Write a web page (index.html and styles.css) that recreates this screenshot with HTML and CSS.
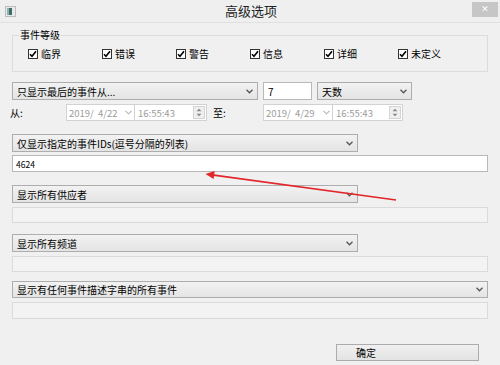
FILE: index.html
```html
<!DOCTYPE html>
<html>
<head>
<meta charset="utf-8">
<title>高级选项</title>
<link rel="stylesheet" href="styles.css">
</head>
<body>
<div class="window">
  <div class="titlebar">
    <div class="tb-left">
      <svg class="app-icon" width="11" height="11" viewBox="0 0 11 11"><rect x="0.5" y="0.5" width="10" height="10" fill="#e9e9e9" stroke="#bdbdbd"/><rect x="2" y="2" width="5" height="7" fill="#3f6d69"/><rect x="2" y="2" width="2" height="7" fill="#8fb3ae"/></svg>
    </div>
    <div class="title">高级选项</div>
    <div class="tb-right"><div class="close">✕</div></div>
  </div>

  <div class="content">
    <fieldset class="group">
      <legend>事件等级</legend>
      <div class="checks">
        <div class="chk"><span class="box"><svg width="8" height="8" viewBox="0 0 8 8"><path d="M1 4.2 L3 6.3 L7 1.3" fill="none" stroke="#000" stroke-width="1.6"/></svg></span>临界</div>
        <div class="chk"><span class="box"><svg width="8" height="8" viewBox="0 0 8 8"><path d="M1 4.2 L3 6.3 L7 1.3" fill="none" stroke="#000" stroke-width="1.6"/></svg></span>错误</div>
        <div class="chk"><span class="box"><svg width="8" height="8" viewBox="0 0 8 8"><path d="M1 4.2 L3 6.3 L7 1.3" fill="none" stroke="#000" stroke-width="1.6"/></svg></span>警告</div>
        <div class="chk"><span class="box"><svg width="8" height="8" viewBox="0 0 8 8"><path d="M1 4.2 L3 6.3 L7 1.3" fill="none" stroke="#000" stroke-width="1.6"/></svg></span>信息</div>
        <div class="chk"><span class="box"><svg width="8" height="8" viewBox="0 0 8 8"><path d="M1 4.2 L3 6.3 L7 1.3" fill="none" stroke="#000" stroke-width="1.6"/></svg></span>详细</div>
        <div class="chk"><span class="box"><svg width="8" height="8" viewBox="0 0 8 8"><path d="M1 4.2 L3 6.3 L7 1.3" fill="none" stroke="#000" stroke-width="1.6"/></svg></span>未定义</div>
      </div>
    </fieldset>

    <div class="row r2">
      <div class="combo w-last"><span>只显示最后的事件从...</span><svg class="chev" width="7" height="5" viewBox="0 0 7 5"><path d="M0.5 0.8 L3.5 3.8 L6.5 0.8" fill="none" stroke="#555" stroke-width="1.3"/></svg></div>
      <div class="textbox w-num">7</div>
      <div class="combo w-unit"><span>天数</span><svg class="chev" width="7" height="5" viewBox="0 0 7 5"><path d="M0.5 0.8 L3.5 3.8 L6.5 0.8" fill="none" stroke="#555" stroke-width="1.3"/></svg></div>
    </div>

    <div class="row r3">
      <span class="lbl-from">从:</span>
      <div class="date d1"><span>2019/&nbsp; 4/22</span><svg width="7" height="5" viewBox="0 0 7 5"><path d="M0.5 0.8 L3.5 3.8 L6.5 0.8" fill="none" stroke="#b5b5b5" stroke-width="1.1"/></svg></div>
      <div class="time t1"><span>16:55:43</span><span class="spin"><svg width="6" height="9" viewBox="0 0 6 9"><path d="M0.5 3.2 L3 0.7 L5.5 3.2 Z" fill="#888"/><path d="M0.5 5.8 L3 8.3 L5.5 5.8 Z" fill="#888"/></svg></span></div>
      <span class="lbl-to">至:</span>
      <div class="date d2"><span>2019/&nbsp; 4/29</span><svg width="7" height="5" viewBox="0 0 7 5"><path d="M0.5 0.8 L3.5 3.8 L6.5 0.8" fill="none" stroke="#b5b5b5" stroke-width="1.1"/></svg></div>
      <div class="time t2"><span>16:55:43</span><span class="spin"><svg width="6" height="9" viewBox="0 0 6 9"><path d="M0.5 3.2 L3 0.7 L5.5 3.2 Z" fill="#888"/><path d="M0.5 5.8 L3 8.3 L5.5 5.8 Z" fill="#888"/></svg></span></div>
    </div>

    <div class="row r4">
      <div class="combo w-mid"><span>仅显示指定的事件IDs(逗号分隔的列表)</span><svg class="chev" width="7" height="5" viewBox="0 0 7 5"><path d="M0.5 0.8 L3.5 3.8 L6.5 0.8" fill="none" stroke="#555" stroke-width="1.3"/></svg></div>
    </div>
    <div class="textbox full ids">4624</div>

    <div class="row r5">
      <div class="combo w-mid"><span>显示所有供应者</span><svg class="chev" width="7" height="5" viewBox="0 0 7 5"><path d="M0.5 0.8 L3.5 3.8 L6.5 0.8" fill="none" stroke="#555" stroke-width="1.3"/></svg></div>
    </div>
    <div class="disabled"></div>

    <div class="row r6">
      <div class="combo w-mid"><span>显示所有频道</span><svg class="chev" width="7" height="5" viewBox="0 0 7 5"><path d="M0.5 0.8 L3.5 3.8 L6.5 0.8" fill="none" stroke="#555" stroke-width="1.3"/></svg></div>
    </div>
    <div class="disabled"></div>

    <div class="row r7">
      <div class="combo full"><span>显示有任何事件描述字串的所有事件</span><svg class="chev" width="7" height="5" viewBox="0 0 7 5"><path d="M0.5 0.8 L3.5 3.8 L6.5 0.8" fill="none" stroke="#555" stroke-width="1.3"/></svg></div>
    </div>
    <div class="disabled d-last"></div>

    <div class="actions">
      <div class="btn">确定</div>
    </div>
  </div>

  <svg class="arrow" width="500" height="365" viewBox="0 0 500 365">
    <line x1="396" y1="200" x2="212" y2="174.9" stroke="#e3262b" stroke-width="1.6"/>
    <polygon points="205.5,174 214.6,171 213.6,179" fill="#e3262b"/>
  </svg>
</div>
</body>
</html>
```

FILE: styles.css
```css
* { box-sizing: border-box; }

html, body {
  margin: 0;
  padding: 0;
}

body {
  width: 500px;
  height: 365px;
  overflow: hidden;
  background: #f0f0f0;
  font-family: "Noto Sans CJK SC", "Microsoft YaHei", sans-serif;
  font-size: 10px;
  color: #000;
}

.window {
  position: relative;
  width: 500px;
  height: 365px;
  background: #f0f0f0;
}

/* title bar */
.titlebar {
  display: grid;
  grid-template-columns: 1fr auto 1fr;
  align-items: center;
  height: 23px;
  border-bottom: 1px solid #e1e1e1;
  background: #efefef;
}

.tb-left {
  padding-left: 5px;
  display: flex;
  align-items: center;
}

.app-icon { display: block; }

.title {
  font-size: 13px;
  color: #1e1e1e;
  line-height: 22px;
  padding-left: 2px;
}

.tb-right {
  justify-self: end;
  align-self: start;
}

.close {
  width: 26px;
  height: 15px;
  margin: 2px 2px 0 0;
  background: #c6c6c6;
  color: #fff;
  font-size: 9px;
  line-height: 15px;
  text-align: center;
  font-family: "DejaVu Sans", sans-serif;
}

/* content */
.content {
  padding: 0 12px;
}

.group {
  margin: 5px 0 0;
  padding: 0 0 5px 6px;
  border: 1px solid #dcdcdc;
  min-width: 0;
}

.group legend {
  padding: 0 1px;
  line-height: 14px;
  font-size: 10px;
}

.checks {
  display: flex;
  align-items: center;
  height: 24px;
  padding-left: 9px;
}

.chk {
  width: 74px;
  display: flex;
  align-items: center;
  gap: 3px;
  line-height: 12px;
}

.box {
  width: 10px;
  height: 10px;
  border: 1px solid #333;
  background: #fff;
  display: flex;
  align-items: center;
  justify-content: center;
}

.box svg { display: block; }

.row {
  display: flex;
  align-items: center;
}

.combo {
  height: 18px;
  display: flex;
  align-items: center;
  justify-content: space-between;
  padding: 0 4px 0 4px;
  border: 1px solid #adadad;
  background: linear-gradient(#f2f2f2, #e4e4e4);
  white-space: nowrap;
}

.chev { display: block; flex: none; }

.textbox {
  height: 18px;
  border: 1px solid #b8b8b8;
  background: #fff;
  display: flex;
  align-items: center;
  padding-left: 4px;
}

.r2 { margin-top: 10px; gap: 5px; }
.w-last { width: 246px; }
.w-num { width: 49px; }
.w-unit { width: 95px; }

.r3 {
  margin-top: 4px;
  height: 17px;
  margin-left: -2px;
}

.lbl-from { width: 56px; }
.lbl-to { width: 50px; margin-left: 6px; }

.date, .time {
  height: 17px;
  background: #fff;
  border: 1px solid #d2d2d2;
  display: flex;
  align-items: center;
  justify-content: space-between;
  color: #9c9c9c;
  font-size: 9.5px;
  white-space: nowrap;
}

.date { padding: 0 2px 0 2px; }
.date svg { display: block; }
.time { padding: 0 1px 0 3px; margin-left: -1px; }

.d1 { width: 69px; }
.t1 { width: 73px; }
.d2 { width: 70px; }
.t2 { width: 71px; }

.spin {
  width: 12px;
  height: 13px;
  border: 1px solid #d4d4d4;
  background: #efefef;
  display: flex;
  align-items: center;
  justify-content: center;
}

.spin svg { display: block; }

.r4 { margin-top: 13px; }
.w-mid { width: 346px; }
.full { width: 476px; }

.ids {
  margin-top: 3px;
  height: 17px;
  font-size: 8.5px;
  padding-left: 3px;
}

.r5 { margin-top: 13px; }
.r6 { margin-top: 11px; }
.r7 { margin-top: 9px; }
.r7 .combo { height: 17px; }

.disabled {
  margin-top: 4px;
  height: 16px;
  border: 1px solid #dadada;
  background: #f3f3f3;
}

.d-last { height: 17px; }

.actions {
  margin-top: 25px;
  display: flex;
  justify-content: flex-end;
  padding-right: 9px;
}

.btn {
  width: 143px;
  height: 17px;
  border: 1px solid #acacac;
  background: linear-gradient(#f0f0f0, #e3e3e3);
  padding-left: 19px;
  line-height: 15px;
}

.arrow {
  position: absolute;
  left: 0;
  top: 0;
  pointer-events: none;
}
```
